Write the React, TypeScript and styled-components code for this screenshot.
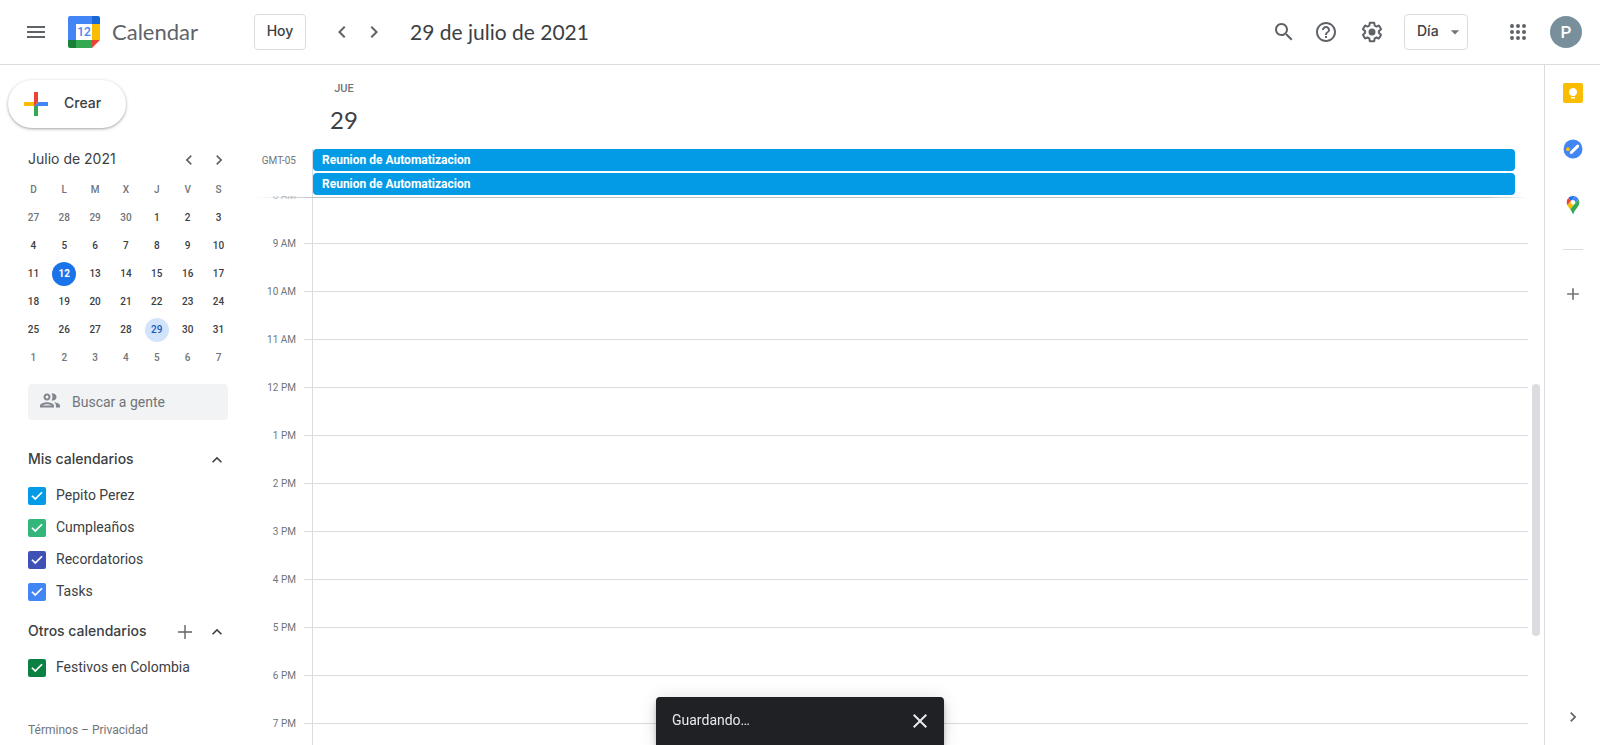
import React from 'react';
import styled, { createGlobalStyle } from 'styled-components';

const color = {
  text: '#3c4043',
  muted: '#70757a',
  icon: '#5f6368',
  line: '#dadce0',
  event: '#039be5',
};

const display = `Lato, 'Open Sans', sans-serif`;
const label = `Inter, Roboto, sans-serif`;

const GlobalStyle = createGlobalStyle`
  *, *::before, *::after { box-sizing: border-box; }
  body {
    margin: 0;
    background: #fff;
    color: ${color.text};
    font-family: Roboto, 'Liberation Sans', sans-serif;
    font-size: 14px;
    line-height: 20px;
  }
  button, input, select { font: inherit; color: inherit; }
  h1, h2, h3, ul, ol { margin: 0; padding: 0; font-weight: inherit; font-size: inherit; list-style: none; }
`;

/* ---------- shared parts ---------- */

const Svg = styled.svg<{ $size?: number }>`
  display: block;
  flex: none;
  width: ${(p) => p.$size ?? 24}px;
  height: ${(p) => p.$size ?? 24}px;
  fill: currentColor;
`;

const paths = {
  menu: 'M3 18h18v-2H3v2zm0-5h18v-2H3v2zm0-7v2h18V6H3z',
  left: 'M15.41 7.41L14 6l-6 6 6 6 1.41-1.41L10.83 12z',
  right: 'M8.59 16.59L10 18l6-6-6-6-1.41 1.41L13.17 12z',
  up: 'M12 8l-6 6 1.41 1.41L12 10.83l4.59 4.58L18 14z',
  down: 'M7 10l5 5 5-5z',
  add: 'M19 13h-6v6h-2v-6H5v-2h6V5h2v6h6v2z',
  close: 'M19 6.41L17.59 5 12 10.59 6.41 5 5 6.41 10.59 12 5 17.59 6.41 19 12 13.41 17.59 19 19 17.59 13.41 12z',
  search:
    'M15.5 14h-.79l-.28-.27C15.41 12.59 16 11.11 16 9.5 16 5.91 13.09 3 9.5 3S3 5.91 3 9.5 5.91 16 9.5 16c1.61 0 3.09-.59 4.23-1.57l.27.28v.79l5 4.99L20.49 19l-4.99-5zm-6 0C7.01 14 5 11.99 5 9.5S7.01 5 9.5 5 14 7.01 14 9.5 11.99 14 9.5 14z',
  help: 'M11 18h2v-2h-2v2zm1-16C6.48 2 2 6.48 2 12s4.48 10 10 10 10-4.48 10-10S17.52 2 12 2zm0 18c-4.41 0-8-3.59-8-8s3.59-8 8-8 8 3.59 8 8-3.59 8-8 8zm0-14c-2.21 0-4 1.79-4 4h2c0-1.1.9-2 2-2s2 .9 2 2c0 2-3 1.75-3 5h2c0-2.25 3-2.5 3-5 0-2.21-1.79-4-4-4z',
  settings:
    'M13.85 22.25h-3.7c-.74 0-1.36-.54-1.45-1.27l-.27-1.89c-.27-.14-.53-.29-.79-.46l-1.8.72c-.7.26-1.47-.03-1.81-.65L2.2 15.53c-.35-.66-.2-1.44.36-1.88l1.53-1.19c-.01-.15-.02-.3-.02-.46 0-.15.01-.31.02-.46l-1.52-1.19c-.59-.45-.74-1.26-.37-1.88l1.85-3.19c.34-.62 1.11-.9 1.79-.63l1.81.73c.26-.17.52-.32.78-.46l.27-1.91c.09-.7.71-1.25 1.44-1.25h3.7c.74 0 1.36.54 1.45 1.27l.27 1.89c.27.14.53.29.79.46l1.8-.72c.71-.26 1.48.03 1.82.65l1.84 3.18c.36.66.2 1.44-.36 1.88l-1.52 1.19c.01.15.02.3.02.46s-.01.31-.02.46l1.52 1.19c.56.45.72 1.23.37 1.86l-1.86 3.22c-.34.62-1.11.9-1.8.63l-1.8-.72c-.26.17-.52.32-.78.46l-.27 1.91c-.1.68-.72 1.22-1.46 1.22zm-3.23-2h2.76l.37-2.55.53-.22c.44-.18.88-.44 1.34-.78l.45-.34 2.38.96 1.38-2.4-2.03-1.58.07-.56c.03-.26.06-.51.06-.78s-.03-.53-.06-.78l-.07-.56 2.03-1.58-1.39-2.4-2.39.96-.45-.35c-.42-.32-.87-.58-1.33-.77l-.52-.22-.37-2.55h-2.76l-.37 2.55-.53.21c-.44.19-.88.44-1.34.79l-.45.33-2.38-.95-1.39 2.39 2.03 1.58-.07.56a7 7 0 0 0-.06.79c0 .26.02.53.06.78l.07.56-2.03 1.58 1.38 2.4 2.39-.96.45.35c.43.33.86.58 1.33.77l.53.22.38 2.55zM15.5 12a3.5 3.5 0 1 1-7 0 3.5 3.5 0 0 1 7 0z',
  apps: 'M6 8a2 2 0 1 0 0-4 2 2 0 0 0 0 4zm6 0a2 2 0 1 0 0-4 2 2 0 0 0 0 4zm6 0a2 2 0 1 0 0-4 2 2 0 0 0 0 4zM6 14a2 2 0 1 0 0-4 2 2 0 0 0 0 4zm6 0a2 2 0 1 0 0-4 2 2 0 0 0 0 4zm6 0a2 2 0 1 0 0-4 2 2 0 0 0 0 4zM6 20a2 2 0 1 0 0-4 2 2 0 0 0 0 4zm6 0a2 2 0 1 0 0-4 2 2 0 0 0 0 4zm6 0a2 2 0 1 0 0-4 2 2 0 0 0 0 4z',
  people:
    'M9 12.25c-2.34 0-7 1.17-7 3.5v1.75h14v-1.75c0-2.33-4.66-3.5-7-3.5zM4.34 15.5c.84-.58 2.87-1.25 4.66-1.25s3.82.67 4.66 1.25H4.34zM9 10.5c1.93 0 3.5-1.57 3.5-3.5S10.93 3.5 9 3.5 5.5 5.07 5.5 7 7.07 10.5 9 10.5zm0-5c.83 0 1.5.67 1.5 1.5S9.83 8.5 9 8.5 7.5 7.83 7.5 7 8.17 5.5 9 5.5zm7.04 6.81c1.16.84 1.96 1.96 1.96 3.44v1.75h4v-1.75c0-2.02-3.5-3.17-5.96-3.44zM15 10.5c1.93 0 3.5-1.57 3.5-3.5S16.93 3.5 15 3.5c-.54 0-1.04.13-1.5.35.63.89 1 1.98 1 3.15s-.37 2.26-1 3.15c.46.22.96.35 1.5.35z',
  check: 'M9 19.3L2.3 12.6l2.1-2.1L9 15.1 19.6 4.5l2.1 2.1z',
  addThin: 'M19 12.7h-6.3V19h-1.4v-6.3H5v-1.4h6.3V5h1.4v6.3H19z',
};

function Icon({ name, size }: { name: keyof typeof paths; size?: number }) {
  return (
    <Svg viewBox="0 0 24 24" $size={size} aria-hidden="true">
      <path d={paths[name]} />
    </Svg>
  );
}

const IconButton = styled.button<{ $size?: number; $color?: string }>`
  display: flex;
  flex: none;
  align-items: center;
  justify-content: center;
  width: ${(p) => p.$size ?? 40}px;
  height: ${(p) => p.$size ?? 40}px;
  padding: 0;
  border: 0;
  border-radius: 50%;
  background: none;
  color: ${(p) => p.$color ?? color.icon};
  cursor: pointer;
`;

/* ---------- page frame ---------- */

const Page = styled.div`
  display: flex;
  flex-direction: column;
  height: 100vh;
  min-height: 600px;
  overflow: hidden;
`;

const Body = styled.div`
  display: flex;
  flex: 1;
  min-height: 0;
`;

/* ---------- header ---------- */

const Header = styled.header`
  display: flex;
  flex: none;
  align-items: center;
  height: 65px;
  padding: 0 18px 0 12px;
  border-bottom: 1px solid ${color.line};
`;

const Brand = styled.div`
  display: flex;
  align-items: center;
  width: 242px;
`;

const BrandLink = styled.a`
  display: flex;
  align-items: center;
  gap: 12px;
  margin-left: 8px;
  color: ${color.icon};
  font: 22px/28px ${display};
  text-decoration: none;
`;

const TodayButton = styled.button`
  width: 52px;
  height: 36px;
  padding: 0 0 2px;
  border: 1px solid ${color.line};
  border-radius: 4px;
  background: #fff;
  font-family: ${label};
  font-weight: 500;
`;

const Pager = styled.div`
  display: flex;
  margin: 0 20px;
`;

const Title = styled.h1`
  flex: 1;
  font: 21px/28px ${display};
`;

const Actions = styled.div`
  display: flex;
  align-items: center;
  gap: 12px;
`;

const Tools = styled.div`
  display: flex;
  gap: 2px;

  > :last-child { margin-left: 4px; }
`;

const ViewPicker = styled.label`
  display: grid;
  align-items: center;
  margin-right: 18px;
  color: ${color.text};

  > * { grid-area: 1 / 1; }

  svg {
    justify-self: end;
    margin-right: 3px;
    color: ${color.muted};
    pointer-events: none;
  }
`;

const ViewSelect = styled.select`
  width: 64px;
  height: 36px;
  padding: 0 24px 2px 12px;
  border: 1px solid ${color.line};
  border-radius: 4px;
  background: #fff;
  appearance: none;
  font-family: ${label};
  font-weight: 500;
`;

const Avatar = styled.button`
  width: 32px;
  height: 32px;
  padding: 0;
  border: 0;
  border-radius: 50%;
  background: #78909c;
  color: #fff;
  font-size: 17px;
  font-weight: 500;
`;

function CalendarLogo() {
  return (
    <Svg viewBox="0 0 32 32" $size={32} aria-hidden="true">
      <path fill="#4285f4" d="M2 0h22v8H8v16H0V2a2 2 0 0 1 2-2z" />
      <path fill="#1967d2" d="M24 0h6a2 2 0 0 1 2 2v6h-8z" />
      <path fill="#fbbc04" d="M24 8h8v16h-8z" />
      <path fill="#34a853" d="M8 24h16v8H8z" />
      <path fill="#188038" d="M0 24h8v8H2a2 2 0 0 1-2-2z" />
      <path fill="#ea4335" d="M24 24h8l-8 8z" />
      <path fill="#fff" d="M8 8h16v16H8z" />
      <text x="16" y="20" textAnchor="middle" fill="#4285f4" fontFamily="Roboto, sans-serif" fontSize="12" fontWeight="500">
        12
      </text>
    </Svg>
  );
}

function TopBar() {
  return (
    <Header>
      <Brand>
        <IconButton $size={48} aria-label="Menú principal">
          <Icon name="menu" />
        </IconButton>
        <BrandLink href="#">
          <CalendarLogo />
          Calendar
        </BrandLink>
      </Brand>
      <TodayButton>Hoy</TodayButton>
      <Pager>
        <IconButton $size={32} aria-label="Día anterior">
          <Icon name="left" />
        </IconButton>
        <IconButton $size={32} aria-label="Día siguiente">
          <Icon name="right" />
        </IconButton>
      </Pager>
      <Title>29 de julio de 2021</Title>
      <Actions>
        <Tools>
          <IconButton aria-label="Buscar">
            <Icon name="search" />
          </IconButton>
          <IconButton aria-label="Asistencia">
            <Icon name="help" />
          </IconButton>
          <IconButton aria-label="Configuración">
            <Icon name="settings" />
          </IconButton>
        </Tools>
        <ViewPicker>
          <ViewSelect aria-label="Vista" defaultValue="dia">
            <option value="dia">Día</option>
          </ViewSelect>
          <Icon name="down" size={20} />
        </ViewPicker>
        <IconButton aria-label="Aplicaciones">
          <Icon name="apps" />
        </IconButton>
        <Avatar aria-label="Cuenta">P</Avatar>
      </Actions>
    </Header>
  );
}

/* ---------- sidebar ---------- */

const Sidebar = styled.aside`
  display: flex;
  flex: none;
  flex-direction: column;
  width: 256px;
  padding: 15px 28px 7px;
`;

const CreateButton = styled.button`
  display: flex;
  flex: none;
  align-items: center;
  align-self: flex-start;
  gap: 10px;
  height: 48px;
  margin-left: -20px;
  padding: 0 25px 0 10px;
  border: 0;
  border-radius: 24px;
  background: #fff;
  box-shadow: 0 1px 2px rgba(60, 64, 67, 0.3), 0 1px 3px 1px rgba(60, 64, 67, 0.15);
  font-family: ${label};
  font-weight: 500;

  span { padding-bottom: 2px; }
`;

const SectionHead = styled.div<{ $top: number }>`
  display: flex;
  flex: none;
  align-items: center;
  height: 32px;
  margin-top: ${(p) => p.$top}px;
`;

const SectionTitle = styled.h2`
  flex: 1;
  padding-bottom: 2px;
  font-family: ${label};
  font-weight: 500;
  white-space: nowrap;
`;

const HeadButtons = styled.div`
  display: flex;
  margin-right: -5px;
`;

const MonthButtons = styled(HeadButtons)`
  margin-right: -6px;
`;

const MonthTitle = styled(SectionTitle)`
  font-weight: 400;
`;

const MonthTable = styled.table`
  flex: none;
  width: 216px;
  margin-left: -10px;
  border-collapse: collapse;
  table-layout: fixed;
  text-align: center;
  font-size: 10px;
  font-weight: 500;
  line-height: 12px;

  th, td { height: 28px; padding: 0; }
  th { color: ${color.muted}; font-weight: 500; }
`;

type DayKind = 'normal' | 'other' | 'today' | 'selected';

const dayColors: Record<DayKind, [string, string]> = {
  normal: [color.text, 'transparent'],
  other: [color.muted, 'transparent'],
  today: ['#fff', '#1a73e8'],
  selected: ['#185abc', '#d2e3fc'],
};

const DayButton = styled.button<{ $kind: DayKind }>`
  width: 24px;
  height: 24px;
  padding: 0;
  border: 0;
  border-radius: 50%;
  background: ${(p) => dayColors[p.$kind][1]};
  color: ${(p) => dayColors[p.$kind][0]};
  font-weight: ${(p) => (p.$kind === 'today' ? 700 : 500)};
  vertical-align: middle;
`;

const PeopleSearch = styled.label`
  display: flex;
  flex: none;
  align-items: center;
  gap: 10px;
  height: 36px;
  margin-top: 12px;
  padding: 0 10px;
  border-radius: 4px;
  background: #f1f3f4;
  color: #80868b;
`;

const PeopleInput = styled.input`
  flex: 1;
  min-width: 0;
  padding: 0;
  border: 0;
  outline: 0;
  background: none;
  color: ${color.text};

  &::placeholder { color: ${color.muted}; opacity: 1; }
`;

const CalendarList = styled.ul`
  margin-top: 4px;
`;

const CalendarItem = styled.label`
  display: flex;
  align-items: center;
  gap: 10px;
  height: 32px;
`;

const CalendarName = styled.span`
  padding-bottom: 2px;
`;

const CheckHolder = styled.span`
  display: grid;
  place-items: center;
  color: #fff;

  > * { grid-area: 1 / 1; }
  svg { pointer-events: none; }
`;

const CheckBox = styled.input<{ $color: string }>`
  width: 18px;
  height: 18px;
  margin: 0;
  border: 2px solid ${(p) => p.$color};
  border-radius: 2px;
  appearance: none;

  &:checked { background: ${(p) => p.$color}; }
`;

const Legal = styled.footer`
  margin-top: auto;
  color: ${color.muted};
  font-size: 12px;
  line-height: 16px;

  a { color: inherit; text-decoration: none; }
`;

const weeks = [
  [27, 28, 29, 30, 1, 2, 3],
  [4, 5, 6, 7, 8, 9, 10],
  [11, 12, 13, 14, 15, 16, 17],
  [18, 19, 20, 21, 22, 23, 24],
  [25, 26, 27, 28, 29, 30, 31],
  [1, 2, 3, 4, 5, 6, 7],
];

function dayKind(week: number, day: number): DayKind {
  if ((week === 0 && day > 20) || week === 5) return 'other';
  if (day === 12) return 'today';
  if (day === 29) return 'selected';
  return 'normal';
}

const myCalendars = [
  { name: 'Pepito Perez', color: '#039be5' },
  { name: 'Cumpleaños', color: '#33b679' },
  { name: 'Recordatorios', color: '#3f51b5' },
  { name: 'Tasks', color: '#4285f4' },
];

const otherCalendars = [{ name: 'Festivos en Colombia', color: '#0b8043' }];

function Calendars({ items }: { items: { name: string; color: string }[] }) {
  return (
    <CalendarList>
      {items.map((item) => (
        <li key={item.name}>
          <CalendarItem>
            <CheckHolder>
              <CheckBox type="checkbox" defaultChecked $color={item.color} />
              <Icon name="check" size={14} />
            </CheckHolder>
            <CalendarName>{item.name}</CalendarName>
          </CalendarItem>
        </li>
      ))}
    </CalendarList>
  );
}

function SidePane() {
  return (
    <Sidebar>
      <CreateButton>
        <Svg viewBox="0 0 36 36" $size={36} aria-hidden="true">
          <path fill="#34a853" d="M16 16v14h4V20z" />
          <path fill="#4285f4" d="M30 16H20l-4 4h14z" />
          <path fill="#fbbc05" d="M6 16v4h10l4-4z" />
          <path fill="#ea4335" d="M20 16V6h-4v14z" />
        </Svg>
        <span>Crear</span>
      </CreateButton>
      <SectionHead $top={16}>
        <MonthTitle>Julio de 2021</MonthTitle>
        <MonthButtons>
          <IconButton $size={30} aria-label="Mes anterior">
            <Icon name="left" size={20} />
          </IconButton>
          <IconButton $size={30} aria-label="Mes siguiente">
            <Icon name="right" size={20} />
          </IconButton>
        </MonthButtons>
      </SectionHead>
      <MonthTable>
        <thead>
          <tr>
            {['D', 'L', 'M', 'X', 'J', 'V', 'S'].map((d) => (
              <th key={d} scope="col">{d}</th>
            ))}
          </tr>
        </thead>
        <tbody>
          {weeks.map((week, w) => (
            <tr key={w}>
              {week.map((day) => (
                <td key={day}>
                  <DayButton $kind={dayKind(w, day)}>{day}</DayButton>
                </td>
              ))}
            </tr>
          ))}
        </tbody>
      </MonthTable>
      <PeopleSearch>
        <Icon name="people" />
        <PeopleInput type="text" placeholder="Buscar a gente" aria-label="Buscar a gente" />
      </PeopleSearch>
      <SectionHead $top={24}>
        <SectionTitle>Mis calendarios</SectionTitle>
        <HeadButtons>
          <IconButton $size={32} $color={color.text} aria-label="Contraer mis calendarios">
            <Icon name="up" size={20} />
          </IconButton>
        </HeadButtons>
      </SectionHead>
      <Calendars items={myCalendars} />
      <SectionHead $top={8}>
        <SectionTitle>Otros calendarios</SectionTitle>
        <HeadButtons>
          <IconButton $size={32} aria-label="Añadir otros calendarios">
            <Icon name="addThin" />
          </IconButton>
          <IconButton $size={32} $color={color.text} aria-label="Contraer otros calendarios">
            <Icon name="up" size={20} />
          </IconButton>
        </HeadButtons>
      </SectionHead>
      <Calendars items={otherCalendars} />
      <Legal>
        <a href="#">Términos</a> – <a href="#">Privacidad</a>
      </Legal>
    </Sidebar>
  );
}

/* ---------- day view ---------- */

const DayView = styled.main`
  display: flex;
  flex: 1;
  flex-direction: column;
  min-width: 0;
`;

const DayHead = styled.div`
  display: flex;
  flex: none;
  flex-direction: column;
  align-items: center;
  align-self: flex-start;
  gap: 11px;
  width: 48px;
  height: 84px;
  margin-left: 64px;
  padding-top: 16px;
`;

const WeekDay = styled.span`
  color: ${color.muted};
  font-size: 11px;
  font-weight: 500;
  line-height: 16px;
`;

const DayNumber = styled.h2`
  font: 24px/24px ${display};
`;

const AllDay = styled.section`
  display: flex;
  flex: none;
  height: 47px;
  padding-right: 16px;
`;

const Zone = styled.span`
  width: 56px;
  padding-right: 16px;
  color: ${color.muted};
  font-size: 10px;
  line-height: 24px;
  text-align: right;
`;

const AllDayEvents = styled.div`
  display: flex;
  flex: 1;
  flex-direction: column;
  gap: 2px;
  padding-right: 13px;
  border-left: 1px solid ${color.line};
`;

const Event = styled.button`
  height: 22px;
  padding: 0 9px;
  border: 0;
  border-radius: 4px;
  background: ${color.event};
  color: #fff;
  font-size: 12px;
  font-weight: 700;
  line-height: 20px;
  text-align: left;
`;

const Schedule = styled.section`
  position: relative;
  display: flex;
  flex: 1;
  min-height: 0;
  overflow: hidden;
`;

const Divider = styled.div`
  position: absolute;
  inset: 1px 16px auto 0;
  height: 1px;
  background: linear-gradient(to right, transparent, #bdc1c6 60px, #bdc1c6 calc(100% - 40px), transparent);
`;

const Hours = styled.ol`
  flex: 1;
  margin-top: -1px;
`;

const HourRow = styled.li`
  display: grid;
  grid-template-columns: 40px 8px 8px 1fr;
  height: 48px;

  &:first-child { color: #bdc1c6; }
  &:not(:first-child) { color: ${color.muted}; }
`;

const HourLabel = styled.span`
  margin-top: -7px;
  font-size: 10px;
  line-height: 16px;
  text-align: right;
`;

const Tick = styled.span`
  grid-column: 3;
  border-top: 1px solid ${color.line};
`;

const Slot = styled.span`
  border-top: 1px solid ${color.line};
  border-left: 1px solid ${color.line};
`;

const ScrollTrack = styled.div`
  display: grid;
  flex: none;
  grid-template-rows: 188fr 252fr 109fr;
  width: 8px;
  margin: 0 4px;
`;

const ScrollThumb = styled.div`
  grid-row: 2;
  border-radius: 4px;
  background: ${color.line};
`;

const hours = ['8 AM', '9 AM', '10 AM', '11 AM', '12 PM', '1 PM', '2 PM', '3 PM', '4 PM', '5 PM', '6 PM', '7 PM'];

function Day() {
  return (
    <DayView>
      <DayHead>
        <WeekDay>JUE</WeekDay>
        <DayNumber>29</DayNumber>
      </DayHead>
      <AllDay>
        <Zone>GMT-05</Zone>
        <AllDayEvents>
          <Event>Reunion de Automatizacion</Event>
          <Event>Reunion de Automatizacion</Event>
        </AllDayEvents>
      </AllDay>
      <Schedule>
        <Hours>
          {hours.map((hour) => (
            <HourRow key={hour}>
              <HourLabel>{hour}</HourLabel>
              <Tick />
              <Slot />
            </HourRow>
          ))}
        </Hours>
        <ScrollTrack>
          <ScrollThumb />
        </ScrollTrack>
        <Divider />
      </Schedule>
    </DayView>
  );
}

/* ---------- app rail ---------- */

const Rail = styled.nav`
  display: flex;
  flex: none;
  flex-direction: column;
  align-items: center;
  gap: 16px;
  width: 56px;
  padding: 8px 0;
  border-left: 1px solid ${color.line};

  > :last-child { margin-top: auto; }
`;

const RailLine = styled.hr`
  width: 20px;
  margin: 8px 0;
  border: 0;
  border-top: 1px solid ${color.line};
`;

function AppRail() {
  return (
    <Rail aria-label="Panel lateral">
      <IconButton aria-label="Keep">
        <Svg viewBox="0 0 20 20" $size={20}>
          <rect width="20" height="20" rx="2" fill="#fbbc04" />
          <path fill="#fff" d="M10 5a4 4 0 0 0-2 7.46V13h4v-.54A4 4 0 0 0 10 5zM8 14h4v1.5H8z" />
        </Svg>
      </IconButton>
      <IconButton aria-label="Tasks">
        <Svg viewBox="0 0 20 20" $size={20}>
          <circle cx="10" cy="10" r="9.5" fill="#4285f4" />
          <circle cx="5" cy="10.3" r="2" fill="#fbbc04" />
          <path d="M8.3 13.5l6.4-6.4" fill="none" stroke="#fff" strokeWidth="3" strokeLinecap="round" />
        </Svg>
      </IconButton>
      <IconButton aria-label="Maps">
        <Svg viewBox="-20 0 132.3 132.3" $size={18}>
          <path fill="#1a73e8" d="M60.2 2.2C55.8.8 51 0 46.1 0 32 0 19.3 6.4 10.8 16.5l21.8 18.3L60.2 2.2z" />
          <path fill="#ea4335" d="M10.8 16.5C4.1 24.5 0 34.9 0 46.1c0 8.7 1.7 15.7 4.6 22l28-33.3-21.8-18.3z" />
          <path fill="#4285f4" d="M46.2 28.5c9.8 0 17.7 7.9 17.7 17.7 0 4.3-1.6 8.3-4.2 11.4 0 0 13.9-16.6 27.5-32.7-5.6-10.8-15.3-19-27-22.7L32.6 34.8c3.3-3.8 8.1-6.3 13.6-6.3" />
          <path fill="#fbbc04" d="M46.2 63.8c-9.8 0-17.7-7.9-17.7-17.7 0-4.3 1.5-8.3 4.1-11.3l-28 33.3c4.8 10.6 12.8 19.2 21 29.9l34.1-40.5c-3.3 3.9-8.1 6.3-13.5 6.3" />
          <path fill="#34a853" d="M59.1 109.2c15.4-24.1 33.3-35 33.3-63 0-7.7-1.9-14.9-5.2-21.3L25.6 98c2.6 3.4 5.3 7.3 7.9 11.3 9.4 14.5 6.8 23.1 12.8 23.1s3.4-8.7 12.8-23.2" />
        </Svg>
      </IconButton>
      <RailLine />
      <IconButton $color="#757575" aria-label="Obtener complementos">
        <Icon name="add" size={20} />
      </IconButton>
      <IconButton aria-label="Ocultar panel lateral">
        <Icon name="right" size={20} />
      </IconButton>
    </Rail>
  );
}

/* ---------- toast ---------- */

const Toast = styled.div`
  position: fixed;
  bottom: 0;
  left: 50%;
  display: flex;
  align-items: center;
  justify-content: space-between;
  width: 288px;
  height: 48px;
  margin-left: -144px;
  padding: 0 8px 0 16px;
  border-radius: 4px 4px 0 0;
  background: #202124;
  box-shadow: 0 3px 5px -1px rgba(0, 0, 0, 0.2), 0 6px 10px rgba(0, 0, 0, 0.14), 0 1px 18px rgba(0, 0, 0, 0.12);
  color: #e8eaed;

  span { padding-bottom: 2px; }
`;

export default function App() {
  return (
    <Page>
      <GlobalStyle />
      <TopBar />
      <Body>
        <SidePane />
        <Day />
        <AppRail />
      </Body>
      <Toast role="status">
        <span>Guardando…</span>
        <IconButton $size={32} $color="#e8eaed" aria-label="Cerrar">
          <Icon name="close" />
        </IconButton>
      </Toast>
    </Page>
  );
}
